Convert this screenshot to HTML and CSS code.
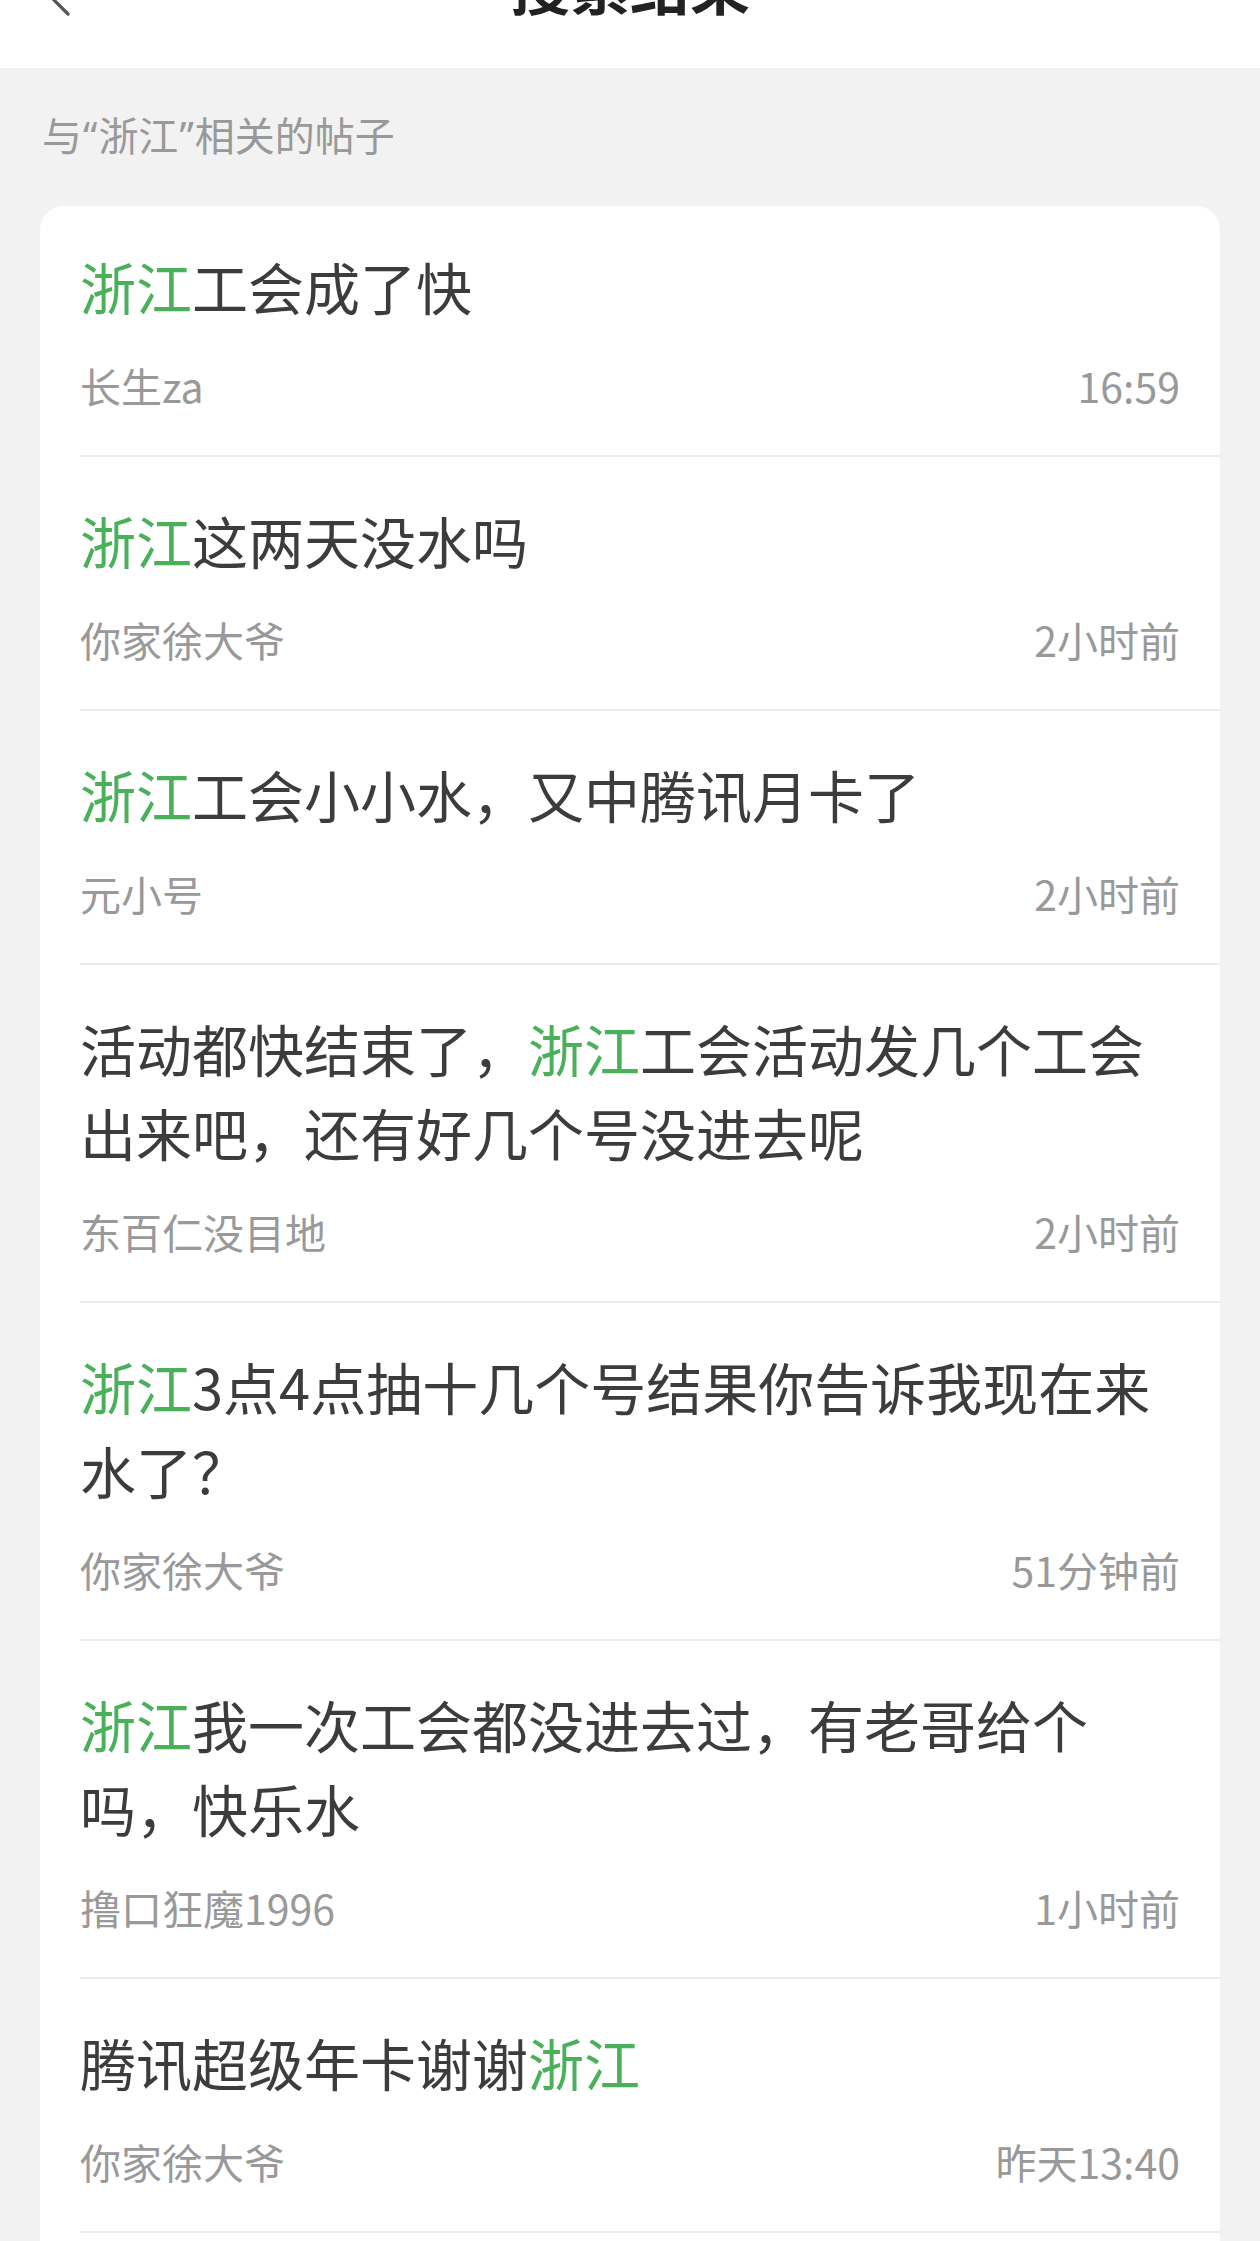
FILE: index.html
```html
<!DOCTYPE html>
<html lang="zh-CN">
<head>
<meta charset="utf-8">
<title>搜索结果</title>
<link rel="stylesheet" href="styles.css">
</head>
<body>
<header class="topbar">
  <span class="back">
    <svg width="60" height="80" viewBox="0 0 60 80" aria-hidden="true">
      <path d="M38 6 L8 36 L38 66" fill="none" stroke="#555" stroke-width="3.2" stroke-linecap="round" stroke-linejoin="round"/>
    </svg>
  </span>
  <h1 class="topbar-title">搜索结果</h1>
  <span class="spacer"></span>
</header>

<main class="content">
  <p class="section-label">与<span class="q">“</span>浙江<span class="q">”</span>相关的帖子</p>

  <ul class="card">
    <li class="post first">
      <p class="post-title"><em class="hl">浙江</em>工会成了快</p>
      <div class="post-meta"><span>长生za</span><span>16:59</span></div>
    </li>
    <li class="post">
      <p class="post-title"><em class="hl">浙江</em>这两天没水吗</p>
      <div class="post-meta"><span>你家徐大爷</span><span>2小时前</span></div>
    </li>
    <li class="post">
      <p class="post-title"><em class="hl">浙江</em>工会小小水，又中腾讯月卡了</p>
      <div class="post-meta"><span>元小号</span><span>2小时前</span></div>
    </li>
    <li class="post">
      <p class="post-title">活动都快结束了，<em class="hl">浙江</em>工会活动发几个工会出来吧，还有好几个号没进去呢</p>
      <div class="post-meta"><span>东百仁没目地</span><span>2小时前</span></div>
    </li>
    <li class="post">
      <p class="post-title"><em class="hl">浙江</em>3点4点抽十几个号结果你告诉我现在来水了？</p>
      <div class="post-meta"><span>你家徐大爷</span><span>51分钟前</span></div>
    </li>
    <li class="post">
      <p class="post-title"><em class="hl">浙江</em>我一次工会都没进去过，有老哥给个吗，快乐水</p>
      <div class="post-meta"><span>撸口狂魔1996</span><span>1小时前</span></div>
    </li>
    <li class="post">
      <p class="post-title">腾讯超级年卡谢谢<em class="hl">浙江</em></p>
      <div class="post-meta"><span>你家徐大爷</span><span>昨天13:40</span></div>
    </li>
  </ul>
</main>
</body>
</html>
```

FILE: styles.css
```css
html {
  overflow: hidden;
}

body {
  margin: 0;
  background: #f2f2f2;
  font-family: "Noto Sans CJK SC", "Noto Sans", sans-serif;
}

.topbar {
  height: 68px;
  background: #ffffff;
  overflow: hidden;
  display: grid;
  grid-template-columns: 120px 1fr 120px;
  align-items: start;
}

.back {
  display: block;
  margin-top: -52px;
  margin-left: 30px;
  line-height: 0;
}

.topbar-title {
  margin: -46px 0 0;
  text-align: center;
  font-size: 60px;
  line-height: 60px;
  font-weight: 700;
  color: #222222;
}

.content {
  padding: 0;
}

.section-label {
  margin: 0;
  height: 50px;
  padding: 41px 0 47px 42px;
  font-size: 40px;
  line-height: 50px;
  color: #999999;
}

.section-label .q {
  font-family: "Noto Sans", "Liberation Sans", sans-serif;
  line-height: 0;
  padding: 0 1px;
}

.card {
  list-style: none;
  margin: 0 40px;
  padding: 0 0 60px;
  background: #ffffff;
  border-radius: 24px;
}

.post {
  margin-left: 40px;
  padding: 41px 40px 42px 0;
  border-bottom: 2px solid #ebebeb;
}

.post.first {
  padding-top: 38px;
}

.post-title {
  margin: 0;
  font-size: 56px;
  line-height: 84px;
  color: #3c3c3c;
}

.hl {
  font-style: normal;
  color: #4ab05a;
}

.post-meta {
  margin-top: 29px;
  display: flex;
  justify-content: space-between;
  font-size: 41px;
  line-height: 56px;
  color: #999999;
}
```
